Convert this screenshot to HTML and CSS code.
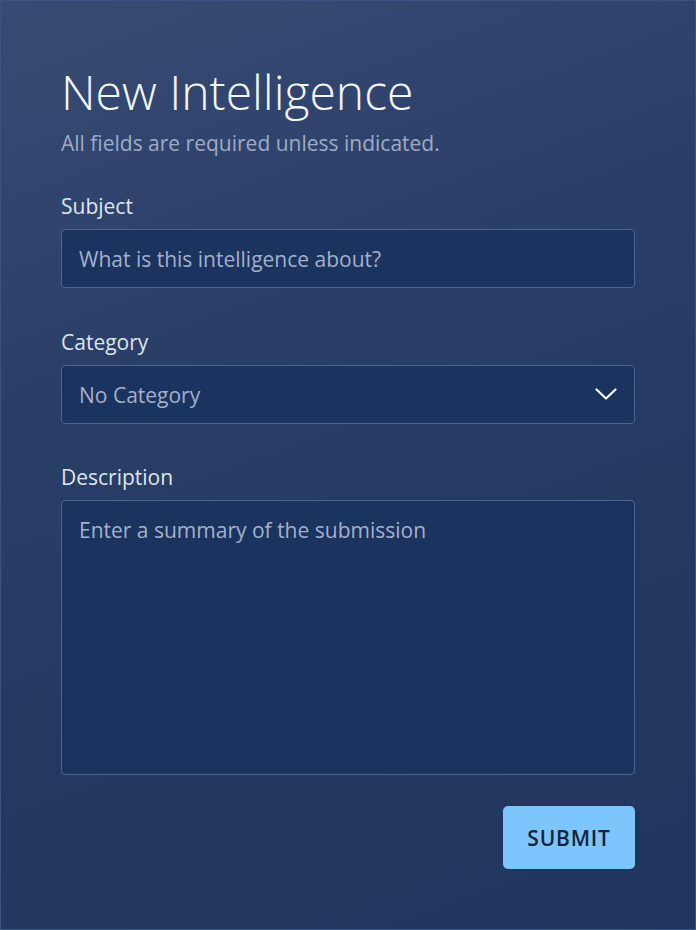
FILE: index.html
```html
<!DOCTYPE html>
<html lang="en">
<head>
<meta charset="utf-8">
<title>New Intelligence</title>
<link rel="stylesheet" href="styles.css">
</head>
<body>
<main class="page">
  <form class="form">
    <header class="head">
      <h1 class="title">New Intelligence</h1>
      <p class="subtitle">All fields are required unless indicated.</p>
    </header>
    <div class="field">
      <label class="label" for="subject">Subject</label>
      <input class="control" id="subject" type="text" placeholder="What is this intelligence about?">
    </div>
    <div class="field">
      <label class="label" for="category">Category</label>
      <div class="select">
        <span class="select-value">No Category</span>
        <svg class="chevron" width="22" height="12" viewBox="0 0 22 12" aria-hidden="true">
          <path d="M1.5 1.5 L11 10.5 L20.5 1.5" fill="none" stroke="#ffffff" stroke-width="2.2" stroke-linecap="round" stroke-linejoin="round"/>
        </svg>
      </div>
    </div>
    <div class="field last">
      <label class="label" for="description">Description</label>
      <textarea class="control area" id="description" placeholder="Enter a summary of the submission"></textarea>
    </div>
    <div class="actions">
      <button class="submit" type="button">SUBMIT</button>
    </div>
  </form>
</main>
</body>
</html>
```

FILE: styles.css
```css
* { box-sizing: border-box; }
html, body { margin: 0; padding: 0; height: 100%; }
body {
  font-family: "Open Sans", "Noto Sans", sans-serif;
  background: linear-gradient(160deg, #374b73 0%, #2a3f68 35%, #23385f 70%, #21365e 100%);
  color: #e3e8f1;
}
.page {
  min-height: 930px;
  border: 1px solid #3c5280;
  padding: 63px 60px 0 60px;
}
.form { display: flex; flex-direction: column; }
.head { margin-bottom: 35px; }
.title {
  margin: 0;
  font-size: 48px;
  font-weight: 300;
  line-height: 56px;
  color: #f4f6fa;
  letter-spacing: 0;
}
.subtitle {
  margin: 9px 0 0 0;
  font-size: 21px;
  line-height: 28px;
  color: #9eabc5;
}
.field { display: flex; flex-direction: column; margin-bottom: 39.5px; }
.field.last { margin-bottom: 31px; }
.label {
  font-size: 21px;
  line-height: 28px;
  color: #dfe5ef;
  margin-bottom: 9px;
}
.control, .select {
  width: 100%;
  height: 59px;
  background: #1b335f;
  border: 1px solid #4d6391;
  border-radius: 4px;
  padding: 15px 17px 14px;
  font-family: inherit;
  font-size: 21px;
  line-height: 28px;
  color: #e3e8f1;
  outline: none;
}
.control::placeholder { color: #a3b0ca; opacity: 1; }
.select {
  display: flex;
  align-items: center;
  justify-content: space-between;
  padding-top: 0;
  padding-bottom: 0;
  padding-right: 17px;
}
.select-value { color: #a3b0ca; line-height: 28px; padding-top: 1px; }
.chevron { display: block; }
.area { height: 275px; resize: none; }
.actions { display: flex; justify-content: flex-end; }
.submit {
  width: 132px;
  height: 63px;
  background: #7dc5fd;
  border: none;
  border-radius: 5px;
  font-family: inherit;
  font-size: 21px;
  font-weight: 600;
  letter-spacing: 0.8px;
  color: #14233f;
  padding: 0;
}
```
